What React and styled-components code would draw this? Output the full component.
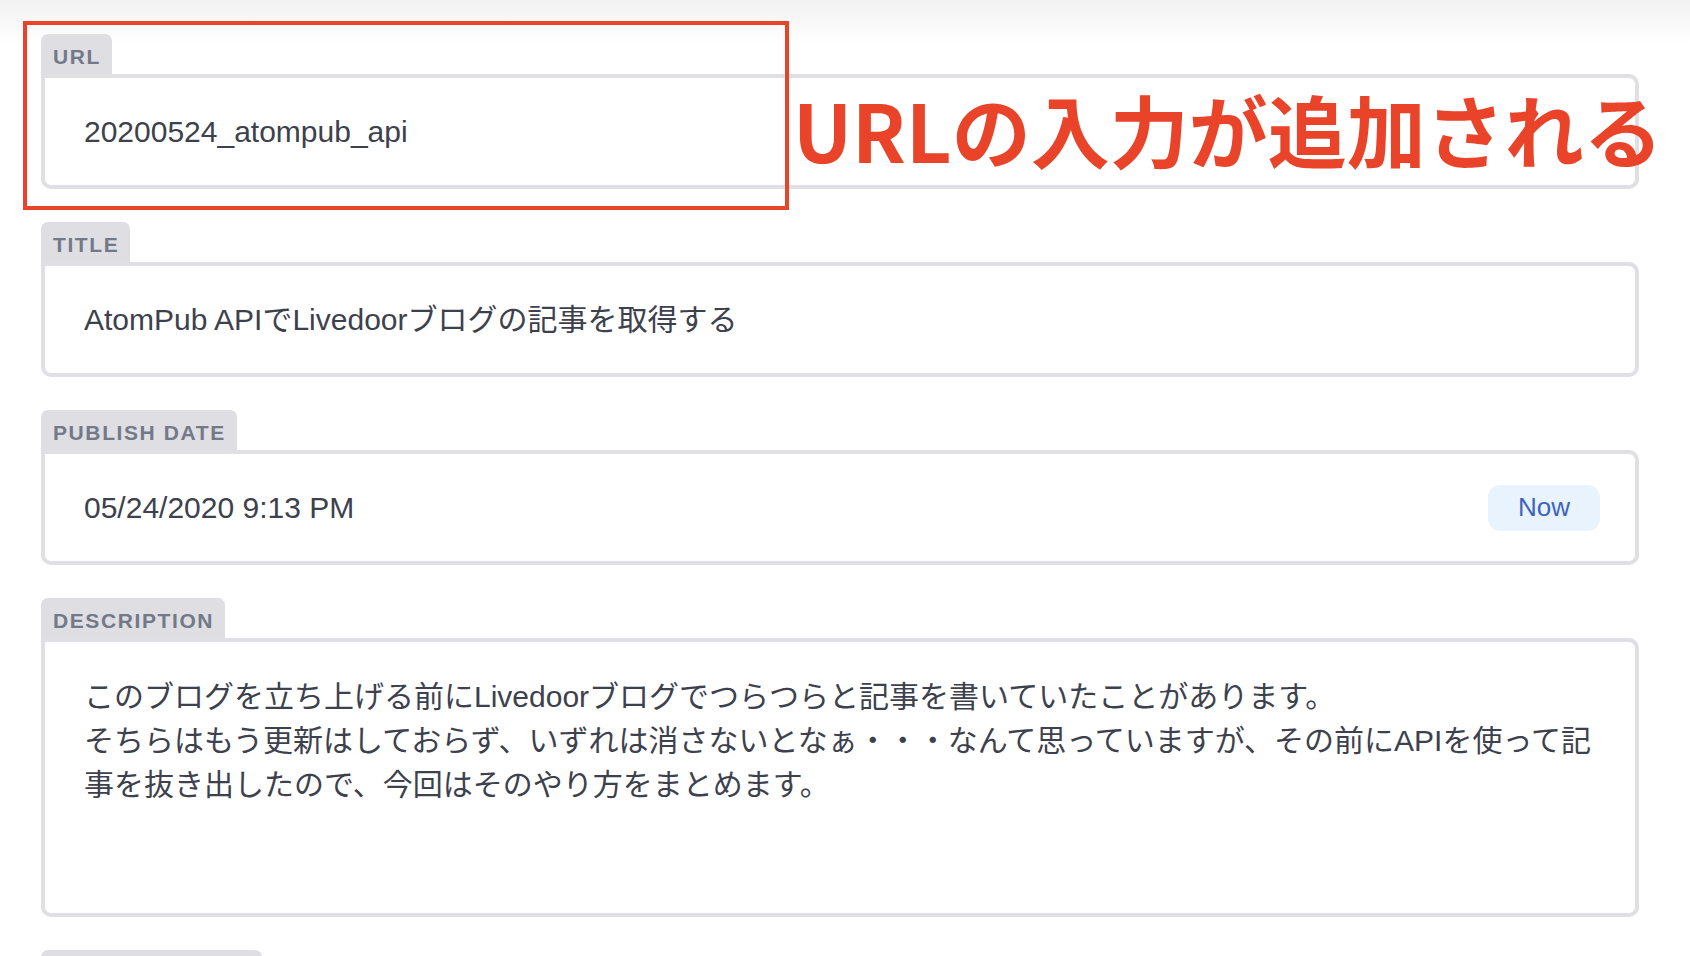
import React from "react";
import styled, { createGlobalStyle } from "styled-components";

const GlobalStyle = createGlobalStyle`
  html, body {
    margin: 0;
    padding: 0;
    background: linear-gradient(#f1f1f2 0px, #ffffff 44px) no-repeat, #ffffff;
    font-family: "Liberation Sans", "Noto Sans CJK JP", sans-serif;
    overflow: hidden;
  }
`;

const Page = styled.div`
  position: relative;
  width: 1690px;
  height: 956px;
  box-sizing: border-box;
  padding: 34px 51px 0 41px;
  overflow: hidden;
`;

const Form = styled.div`
  display: flex;
  flex-direction: column;
  gap: 33px;
`;

const Field = styled.div`
  display: flex;
  flex-direction: column;
  align-items: flex-start;
`;

const Tab = styled.div`
  height: 40px;
  min-width: ${(p) => p.$width || 0}px;
  box-sizing: border-box;
  padding: 6px 11px 0 12px;
  line-height: 34px;
  background: #dedee3;
  border-radius: 7px 7px 0 0;
  color: #737988;
  font-size: 21px;
  font-weight: 700;
  letter-spacing: 1.6px;
`;

const Box = styled.div`
  width: 100%;
  box-sizing: border-box;
  min-height: ${(p) => (p.$multiline ? "279px" : "115px")};
  padding: ${(p) => (p.$multiline ? "33px 35px 0 39px" : "0 35px 0 39px")};
  display: flex;
  align-items: ${(p) => (p.$multiline ? "flex-start" : "center")};
  justify-content: space-between;
  border: 4px solid #dfdfe4;
  border-radius: 0 10px 10px 10px;
  background: #ffffff;
`;

const Value = styled.div`
  color: #3d414d;
  font-size: 30px;
  line-height: 44px;
  white-space: ${(p) => (p.$multiline ? "pre-wrap" : "nowrap")};
`;

const NowButton = styled.button`
  width: 112px;
  height: 46px;
  border: none;
  border-radius: 12px;
  background: #e9f3fd;
  color: #3b63c2;
  font-family: "Liberation Sans", sans-serif;
  font-size: 26px;
  padding: 0;
  cursor: pointer;
`;

const Highlight = styled.div`
  position: absolute;
  left: 23px;
  top: 21px;
  width: 766px;
  height: 189px;
  box-sizing: border-box;
  border: 4px solid #e9432a;
`;

const Note = styled.div`
  position: absolute;
  left: 793px;
  top: 89px;
  color: #e9432a;
  font-family: "Noto Sans CJK JP", sans-serif;
  font-size: 79px;
  font-weight: 700;
  line-height: 1;
  white-space: nowrap;
`;

const description =
  "このブログを立ち上げる前にLivedoorブログでつらつらと記事を書いていたことがあります。\nそちらはもう更新はしておらず、いずれは消さないとなぁ・・・なんて思っていますが、その前にAPIを使って記事を抜き出したので、今回はそのやり方をまとめます。";

const fields = [
  { label: "URL", value: "20200524_atompub_api" },
  { label: "TITLE", value: "AtomPub APIでLivedoorブログの記事を取得する" },
  { label: "PUBLISH DATE", value: "05/24/2020 9:13 PM", now: true },
  { label: "DESCRIPTION", value: description, multiline: true },
  { label: "", value: "", tabWidth: 221 },
];

const App = () => {
  return (
    <Page>
      <GlobalStyle />
      <Form>
        {fields.map((f, i) => (
          <Field key={i}>
            <Tab $width={f.tabWidth}>{f.label}</Tab>
            <Box $multiline={f.multiline}>
              <Value $multiline={f.multiline}>{f.value}</Value>
              {f.now && <NowButton>Now</NowButton>}
            </Box>
          </Field>
        ))}
      </Form>
      <Highlight />
      <Note>URLの入力が追加される</Note>
    </Page>
  );
};

export default App;
